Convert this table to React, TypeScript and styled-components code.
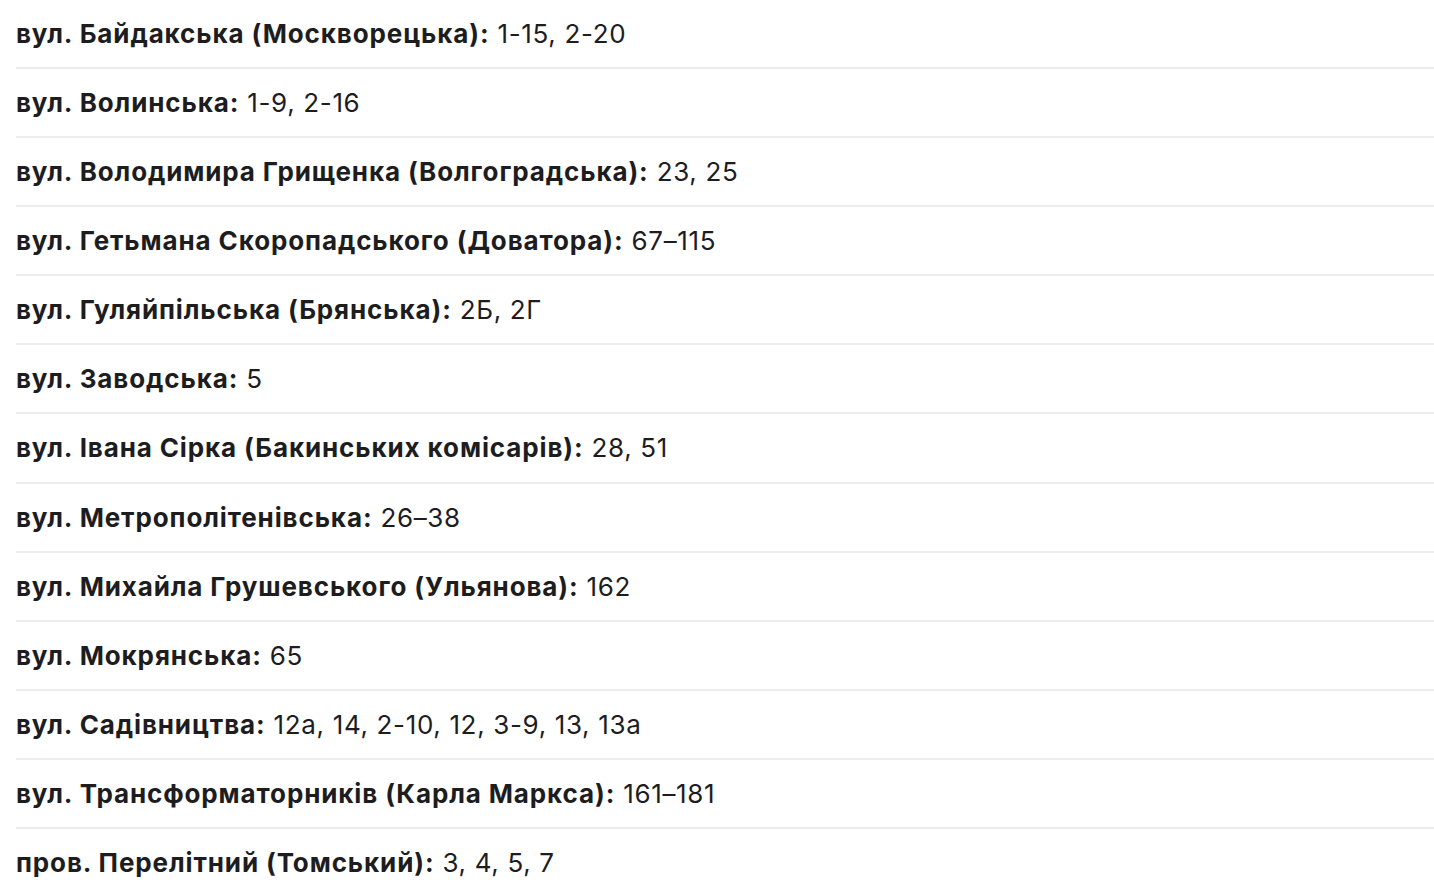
import styled, { createGlobalStyle } from "styled-components";

const GlobalStyle = createGlobalStyle`
  body {
    margin: 0;
    background: #ffffff;
  }
`;

const List = styled.ul`
  list-style: none;
  margin: 0;
  padding: 0 0 0 16px;
  font-family: Inter, "Noto Sans", sans-serif;
  font-size: 26px;
  letter-spacing: 0.65px;
  color: #1d1d1f;
`;

const Row = styled.li`
  padding: 17px 0 16.09px;
  line-height: 34px;
  border-bottom: 2px solid #ededed;
  white-space: nowrap;

  &:last-child {
    border-bottom: none;
  }
`;

const Street = styled.strong`
  font-weight: 700;
  letter-spacing: 0.88px;
`;

const streets: [string, string][] = [
  ["вул. Байдакська (Москворецька)", "1-15, 2-20"],
  ["вул. Волинська", "1-9, 2-16"],
  ["вул. Володимира Грищенка (Волгоградська)", "23, 25"],
  ["вул. Гетьмана Скоропадського (Доватора)", "67–115"],
  ["вул. Гуляйпільська (Брянська)", "2Б, 2Г"],
  ["вул. Заводська", "5"],
  ["вул. Івана Сірка (Бакинських комісарів)", "28, 51"],
  ["вул. Метрополітенівська", "26–38"],
  ["вул. Михайла Грушевського (Ульянова)", "162"],
  ["вул. Мокрянська", "65"],
  ["вул. Садівництва", "12а, 14, 2-10, 12, 3-9, 13, 13а"],
  ["вул. Трансформаторників (Карла Маркса)", "161–181"],
  ["пров. Перелітний (Томський)", "3, 4, 5, 7"],
];

const App = () => {
  return (
    <>
      <GlobalStyle />
      <List>
        {streets.map(([name, houses]) => (
          <Row key={name}>
            <Street>{name}:</Street> {houses}
          </Row>
        ))}
      </List>
    </>
  );
};

export default App;
